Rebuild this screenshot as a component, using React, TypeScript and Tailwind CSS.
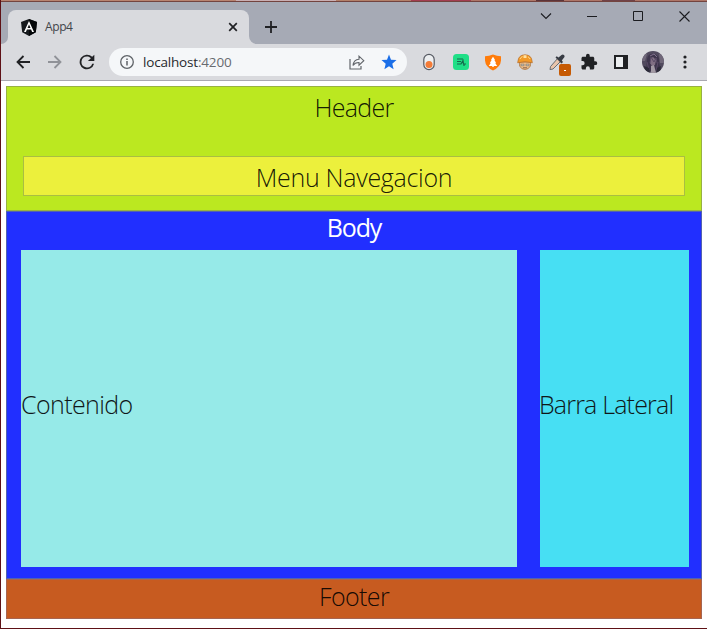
import React from 'react';

const Cell = ({ children }: { children: React.ReactNode }) => (
  <div className="flex w-8 h-full shrink-0 items-center justify-center">{children}</div>
);

const AngularIcon = () => (
  <svg width="16" height="17" viewBox="0 0 16 17">
    <path d="M8 0 16 3 14.8 13.2 8 17 1.2 13.2 0 3Z" fill="#16191d" />
    <path d="M8 0v17l6.8-3.8L16 3Z" fill="#050709" />
    <path d="M8 2 3 13h1.9l1-2.5h4.2l1 2.5H13ZM8 5.6 9.5 9h-3Z" fill="#fff" fillRule="evenodd" />
  </svg>
);

function TabStrip() {
  return (
    <div className="flex h-[42px] bg-[#a6aab5]">
      <div className="flex h-full w-[7px] shrink-0 items-end bg-[#d9dade]">
        <div className="h-full w-full rounded-br-[8px] bg-[#a6aab5]" />
      </div>
      <div className="mt-2 flex h-[34px] w-[241px] shrink-0 bg-[#a6aab5]">
        <div className="flex w-full items-center rounded-t-[8px] bg-[#d9dade] pl-[13px] pr-[11px]">
          <AngularIcon />
          <span className="ml-2 text-[12px] tracking-[-0.4px] text-[#42454a]">App4</span>
          <svg className="ml-auto" width="10" height="10" viewBox="0 0 10 10">
            <path d="m1.2 1.2 7.6 7.6m0-7.6L1.2 8.8" stroke="#202124" strokeWidth="1.7" />
          </svg>
        </div>
      </div>
      <div className="flex h-full w-2 shrink-0 bg-[#d9dade]">
        <div className="h-full w-full rounded-bl-[8px] bg-[#a6aab5]" />
      </div>
      <svg className="ml-[8px] mt-[19px] shrink-0" width="12" height="12" viewBox="0 0 12 12">
        <path d="M6 0v12M0 6h12" stroke="#202124" strokeWidth="1.8" />
      </svg>
      <div className="ml-auto flex h-7 items-center text-[#1b1c20]">
        <div className="flex w-[46px] justify-center">
          <svg width="12" height="8" viewBox="0 0 12 8"><path d="m1 1.5 5 5 5-5" fill="none" stroke="currentColor" strokeWidth="1.1" /></svg>
        </div>
        <div className="flex w-[46px] justify-center">
          <svg width="10" height="2" viewBox="0 0 10 2"><path d="M0 1.5h10" stroke="currentColor" /></svg>
        </div>
        <div className="flex w-[46px] justify-center">
          <svg width="10" height="10" viewBox="0 0 10 10"><path d="M.5.5h9v9h-9z" fill="none" stroke="currentColor" /></svg>
        </div>
        <div className="flex w-[46px] justify-center">
          <svg width="11" height="11" viewBox="0 0 11 11"><path d="m.5.5 10 10m0-10-10 10" stroke="currentColor" strokeWidth="1.1" /></svg>
        </div>
      </div>
    </div>
  );
}

function Extensions() {
  return (
    <>
      <Cell>
        <svg width="12" height="18" viewBox="0 0 12 18">
          <rect x=".8" y="1.3" width="10.4" height="15.4" rx="5.2" fill="#eceef0" stroke="#555962" strokeWidth="1.2" />
          <circle cx="6" cy="11.5" r="3.5" fill="#f47b36" />
        </svg>
      </Cell>
      <Cell>
        <svg width="16" height="16" viewBox="0 0 16 16">
          <rect width="16" height="16" rx="3.5" fill="#20df87" />
          <path d="M4 5h6M4 7.500h4M4 10h4l2-3.500.5 3.500H13M11 10v2" fill="none" stroke="#17684c" strokeWidth="1.200" />
        </svg>
      </Cell>
      <Cell>
        <svg width="16" height="17" viewBox="0 0 16 17">
          <path d="M0 2.200Q4 2 8 .5q4 1.500 8 1.700v4.300Q15.500 13 8 16.500.5 13 0 6.500Z" fill="#ff7c0b" />
          <path d="m8 2.800 2 3-.6.2 1.600 2.800-.7.2 1.900 3H8.700V13H7.300v-1H3.800l1.900-3-.7-.2L6.600 6 6 5.800Z" fill="#fff" />
        </svg>
      </Cell>
      <Cell>
        <svg width="16" height="16" viewBox="0 0 16 16">
          <path d="M2.600 8h10.800v4q-1.800 3.500-5.400 3.500T2.600 12Z" fill="#e9bd8c" stroke="#a87541" strokeWidth=".8" />
          <path d="M1 7Q1.500 1 8 .8q6.500.2 7 6.200l.3 1.800Q8 6.500.7 8.800Z" fill="#f39a28" stroke="#b76820" strokeWidth=".7" />
          <path d="M6.500 1.200h3V4h-3Z" fill="#ffe0a0" />
          <path d="M3 5q1-2 2.500-2.500M11 2.800Q12.800 4 13 5" fill="none" stroke="#ffd98b" />
          <path d="M4 10.200h3v1.500H4Zm5 0h3v1.500H9Z" fill="#d6e6e6" stroke="#776454" strokeWidth=".6" />
          <path d="M6 13.800h4" stroke="#8c6248" />
        </svg>
      </Cell>
      <Cell>
        <div className="relative h-4 w-4">
          <svg width="16" height="16" viewBox="0 0 16 16">
            <path d="m9 4 3 3-8 8-3 .6.5-3Z" fill="#e8c4aa" stroke="#686d72" strokeWidth="1" />
            <path d="m6.500 3.500 1.200-1.200L9.500 3.500l3-2.500q1.300-1 2.500.1 1.100 1.200.1 2.500L12.800 6.500 14 8l-1.500 1.500Z" fill="#383c44" />
          </svg>
          <div className="absolute left-[10px] top-[10px] flex h-3 w-3 items-center justify-center rounded-[2px] bg-[#c65a04]">
            <div className="h-px w-[2px] bg-white" />
          </div>
        </div>
      </Cell>
      <Cell>
        <svg width="18" height="18" viewBox="0 0 24 24" fill="#202124">
          <path d="M20.500 11H19V7c0-1.100-.9-2-2-2h-4V3.500a2.500 2.500 0 0 0-5 0V5H4c-1.100 0-2 .9-2 2v3.800h1.500a2.700 2.700 0 0 1 0 5.400H2V20c0 1.100.9 2 2 2h3.800v-1.500a2.700 2.700 0 0 1 5.400 0V22H17c1.100 0 2-.9 2-2v-4h1.500a2.500 2.500 0 0 0 0-5Z" />
        </svg>
      </Cell>
      <Cell>
        <svg width="14" height="14" viewBox="0 0 14 14">
          <path d="M0 0h14v14H0ZM2 2v10h7V2Z" fill="#202124" fillRule="evenodd" />
          <path d="M2 2h7v10H2Z" fill="#eceef0" />
        </svg>
      </Cell>
      <Cell>
        <svg width="22" height="22" viewBox="0 0 22 22">
          <clipPath id="avatar"><circle cx="11" cy="11" r="11" /></clipPath>
          <g clipPath="url(#avatar)">
            <path d="M0 0h22v22H0z" fill="#514a5e" />
            <path d="M0 3h5L3 10H0Zm17 0h5v9h-4Z" fill="#706779" />
            <path d="M5 8q1-6 7-5 6 1 5 8l2 9H4Z" fill="#3e354c" />
            <path d="m8 8 3-2 3 3-1 5-3 1-2-3Z" fill="#806f83" />
            <path d="m8 12 1-6 3 5 2-4 1 5M5 11l2 8m9-8-2 9" fill="none" stroke="#5a4c67" />
            <path d="m9 15 3-1 2 8H9Z" fill="#a29aa4" />
            <path d="m2 15 5 2 1 5H3Zm13 2 4-2-1 7h-4Z" fill="#2c2b39" />
            <path d="m8 5 4-2 3 3" fill="none" stroke="#80708c" />
          </g>
        </svg>
      </Cell>
      <Cell>
        <svg width="4" height="14" viewBox="0 0 4 14" fill="#202124">
          <circle cx="2" cy="2" r="1.600" /><circle cx="2" cy="7" r="1.600" /><circle cx="2" cy="12" r="1.600" />
        </svg>
      </Cell>
    </>
  );
}

function Toolbar() {
  return (
    <div className="flex h-[37px] items-center border-b border-[#aaa9b1] bg-[#d9dade] pl-[6px]">
      <Cell>
        <svg width="14" height="14" viewBox="0 0 14 14"><path d="M14 7H1.500M7.500 1l-6 6 6 6" fill="none" stroke="#202124" strokeWidth="1.800" /></svg>
      </Cell>
      <Cell>
        <svg width="14" height="14" viewBox="0 0 14 14"><path d="M0 7h12.500M6.500 1l6 6-6 6" fill="none" stroke="#909298" strokeWidth="1.800" /></svg>
      </Cell>
      <Cell>
        <svg width="22" height="22" viewBox="0 0 24 24" fill="#202124">
          <path d="M17.650 6.350A8 8 0 1 0 19.730 14h-2.080A6 6 0 1 1 12 6c1.660 0 3.140.69 4.220 1.780L13 11h7V4Z" />
        </svg>
      </Cell>
      <div className="ml-[6px] mr-[6px] flex h-7 w-[298px] shrink-0 items-center rounded-full bg-[#f5f7f9] pl-[11px] pr-[10px]">
        <svg width="14" height="14" viewBox="0 0 14 14">
          <circle cx="7" cy="7" r="6.300" fill="none" stroke="#5f6368" strokeWidth="1.300" />
          <path d="M7 6v4.500M7 3.500V5" stroke="#5f6368" strokeWidth="1.500" />
        </svg>
        <span className="ml-[9px] text-[13.5px] tracking-[-0.18px] text-[#27292d]">localhost<span className="text-[#686b70]">:4200</span></span>
        <svg className="ml-auto" width="16" height="15" viewBox="0 0 16 15">
          <path d="M1 4v10h11v-3" fill="none" stroke="#62666b" strokeWidth="1.200" />
          <path d="M4 10.500q.8-6 6-6.200V1.200l4.800 4.500-4.800 4.500V7.500Q6 7.400 4 10.500Z" fill="none" stroke="#62666b" strokeWidth="1.100" />
        </svg>
        <svg className="ml-4" width="16" height="16" viewBox="0 0 16 16">
          <path d="m8 .5 2 5.200 5.500.4-4.200 3.600 1.300 5.500L8 12.300l-4.600 2.900 1.300-5.500L.5 6.100 6 5.700Z" fill="#1a6ee8" />
        </svg>
      </div>
      <Extensions />
    </div>
  );
}

function DemoPage() {
  return (
    <main className="mx-[5px] mt-[5px] flex h-[533px] flex-col text-[25px] font-light leading-[38px] text-black/90">
      <header className="h-[125px] shrink-0 border border-[#98b142] bg-[#bbe820] px-4 text-center">
        <div className="h-[69px] pt-px tracking-[-0.75px]">Header</div>
        <nav className="h-10 border border-[#a9be42] bg-[#ecf03c] pt-px tracking-[-0.3px]">Menu Navegacion</nav>
      </header>
      <section className="h-[368px] shrink-0 border border-[#5362b0] bg-[#212fff]">
        <div className="h-[38px] text-center font-normal leading-[31px] tracking-[-1.1px] text-white">Body</div>
        <div className="flex h-[317px] justify-between pl-[14px] pr-[12px] text-[#101719]">
          <article className="flex w-[496px] items-center bg-[#96eae8]"><span className="pb-[9px] tracking-[-0.6px]">Contenido</span></article>
          <aside className="flex w-[149px] items-center whitespace-nowrap bg-[#47dff3]"><span className="-ml-px pb-[9px] tracking-[-0.82px]">Barra Lateral</span></aside>
        </div>
      </section>
      <footer className="h-10 shrink-0 border border-[#a66551] bg-[#c75b20] text-center leading-[32px] tracking-[-0.6px]">Footer</footer>
    </main>
  );
}

export default function App() {
  return (
    <div className="h-[629px] w-[707px] overflow-hidden border-b border-l border-[#5e1116] bg-white font-['Open_Sans','Noto_Sans',sans-serif]">
      <div className="flex h-[2px] border-b border-[#73443f] bg-[#ad7567]">
        <div className="w-[235px] bg-[#b88370]" />
        <div className="w-[100px] bg-[#c9afb3]" />
        <div className="w-[75px] bg-[#b38069]" />
        <div className="w-[60px] bg-[#a33d50]" />
        <div className="ml-[65px] w-[28px] bg-[#5c3439]" />
        <div className="ml-[38px] w-[33px] bg-[#704248]" />
      </div>
      <TabStrip />
      <Toolbar />
      <DemoPage />
    </div>
  );
}
